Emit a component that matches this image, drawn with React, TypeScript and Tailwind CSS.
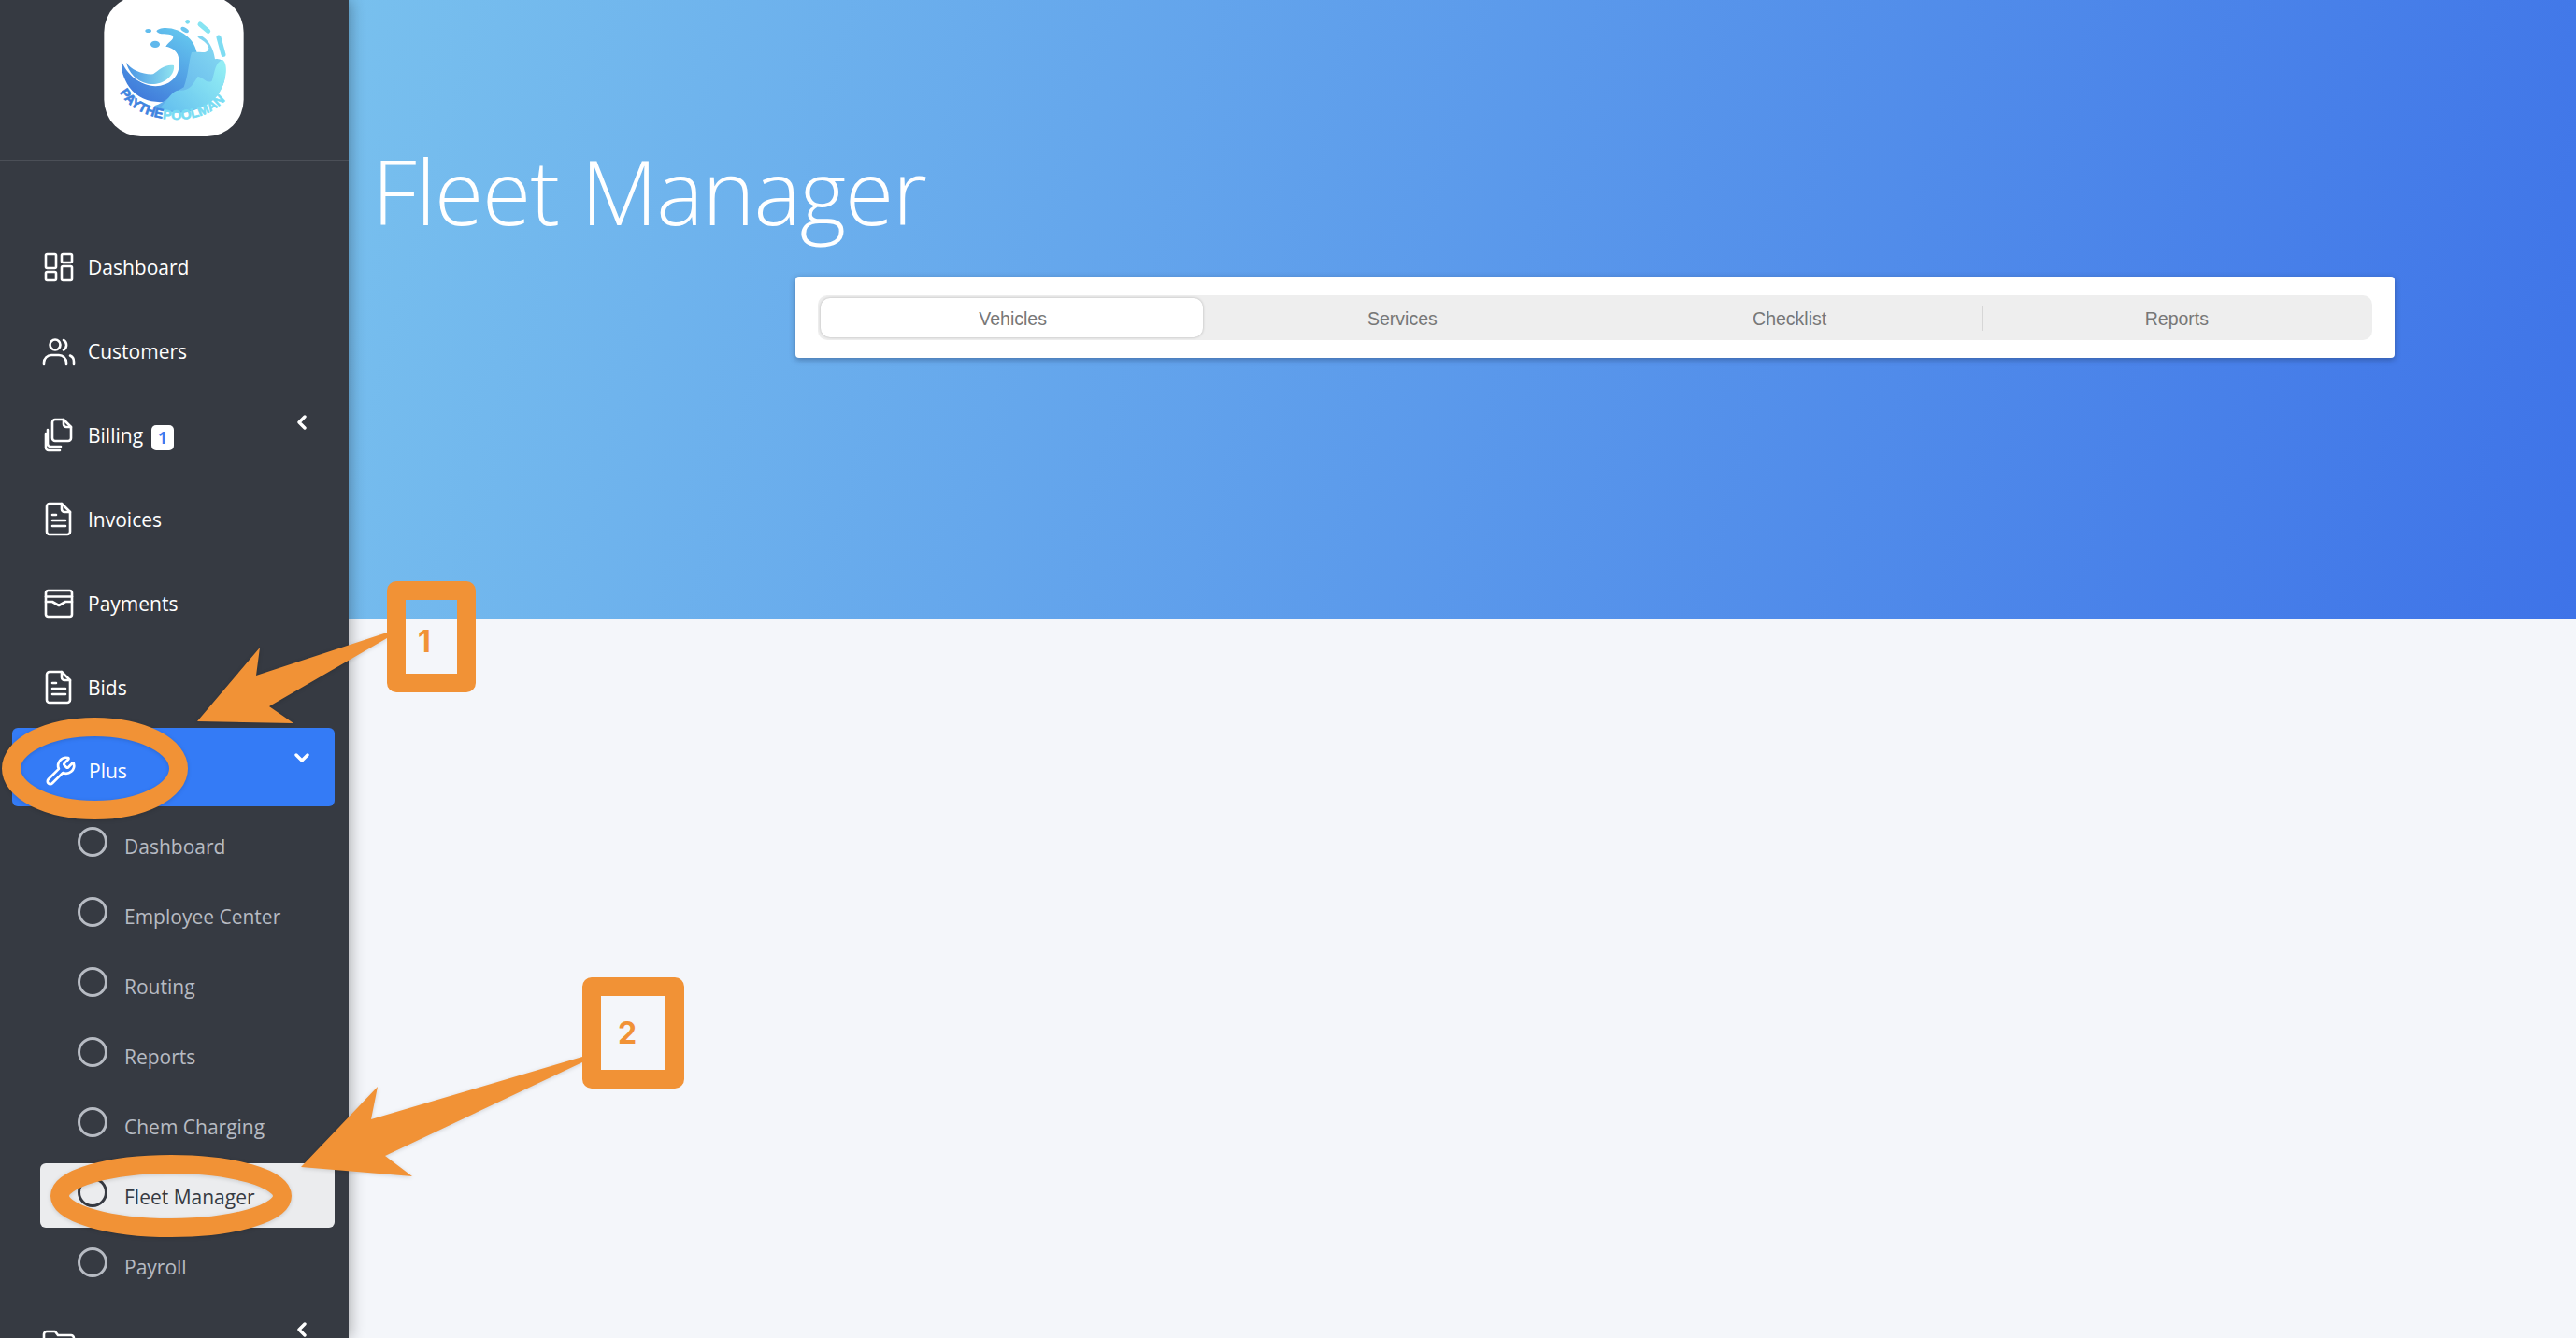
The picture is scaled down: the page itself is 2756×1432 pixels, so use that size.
import React from "react";
import { Wrench } from "lucide-react";

const strokeProps = {
  fill: "none",
  stroke: "currentColor",
  strokeWidth: 2.6,
  strokeLinecap: "round" as const,
  strokeLinejoin: "round" as const,
};

function Glyph(props: { children: React.ReactNode }) {
  return (
    <svg width="30" height="30" viewBox="0 0 30 30" className="shrink-0 overflow-visible" {...strokeProps}>
      {props.children}
    </svg>
  );
}

function DashIcon() {
  return (
    <Glyph>
      <rect x="1" y="1" width="11" height="15" rx="1.5" />
      <rect x="18" y="1" width="11" height="9" rx="1.5" />
      <rect x="1" y="20" width="11" height="9" rx="1.5" />
      <rect x="18" y="14" width="11" height="15" rx="1.5" />
    </Glyph>
  );
}

function UsersIcon() {
  return (
    <Glyph>
      <circle cx="11" cy="8" r="5.5" />
      <path d="M-1 29v-2a8 8 0 0 1 8-8h8a8 8 0 0 1 8 8v2" />
      <path d="M20 3a6 6 0 0 1 0 10.5" />
      <path d="M27 19.5a7 7 0 0 1 4 6.5v3" />
    </Glyph>
  );
}

function CopyIcon() {
  return (
    <Glyph>
      <path d="M11 -2h9l8 8v12a3 3 0 0 1-3 3h-14a3 3 0 0 1-3-3v-17a3 3 0 0 1 3-3z" />
      <path d="M20 -2v5a3 3 0 0 0 3 3h5" />
      <path d="M3 9v15a3 3 0 0 0 3 3h11" />
      <path d="M1 13v15a3 3 0 0 0 3 3h12" />
    </Glyph>
  );
}

function DocIcon() {
  return (
    <Glyph>
      <path d="M5 -2h13l9 9v21a3 3 0 0 1-3 3h-19a3 3 0 0 1-3-3v-27a3 3 0 0 1 3-3z" />
      <path d="M18 -2v6a3 3 0 0 0 3 3h6" />
      <path d="M8 10h4M8 16h14M8 22h14" />
    </Glyph>
  );
}

function MailIcon() {
  return (
    <Glyph>
      <rect x="1" y="1" width="28" height="28" rx="2.5" />
      <path d="M1 7.5h28" />
      <path d="M1 13h7l7 4 7-4h7" />
    </Glyph>
  );
}

function FolderIcon() {
  return (
    <Glyph>
      <path d="M-1 6a3 3 0 0 1 3-3h9l3 4h14a3 3 0 0 1 3 3v15a3 3 0 0 1-3 3h-26a3 3 0 0 1-3-3z" />
    </Glyph>
  );
}

function ChevronLeft() {
  return (
    <svg width="12" height="16" viewBox="0 0 12 16" fill="none" stroke="currentColor" strokeWidth="3.4" strokeLinecap="round" strokeLinejoin="round">
      <path d="M9 2 3 8l6 6" />
    </svg>
  );
}

function ChevronDown() {
  return (
    <svg width="16" height="12" viewBox="0 0 16 12" fill="none" stroke="currentColor" strokeWidth="3.4" strokeLinecap="round" strokeLinejoin="round">
      <path d="M2 3l6 6 6-6" />
    </svg>
  );
}

function Logo() {
  return (
    <svg width="150" height="146" viewBox="64 0 448 438" className="absolute left-[111px] top-0">
      <defs>
        <linearGradient id="lgA" x1="0.1" y1="0.9" x2="0.7" y2="0">
          <stop offset="0" stopColor="#3f78da" />
          <stop offset="1" stopColor="#63c4ee" />
        </linearGradient>
        <linearGradient id="lgB" x1="0" y1="0.5" x2="1" y2="0.5">
          <stop offset="0" stopColor="#4a94e4" />
          <stop offset="1" stopColor="#8fe3f0" />
        </linearGradient>
        <linearGradient id="lgC" x1="0" y1="1" x2="1" y2="0">
          <stop offset="0" stopColor="#5aa8ea" />
          <stop offset="1" stopColor="#88def2" />
        </linearGradient>
        <linearGradient id="lgD" x1="0" y1="1" x2="1" y2="0.2">
          <stop offset="0" stopColor="#62bdee" />
          <stop offset="1" stopColor="#92edf4" />
        </linearGradient>
        <path id="logoArc" d="M114 296C170 402 395 424 472 296" />
      </defs>
      <rect x="64" y="-14" width="448" height="452" rx="118" fill="#fff" />
      <path d="M232 100C240 85 300 82 340 125C375 165 372 230 340 285C300 340 190 345 145 280C125 250 118 225 120 195C135 240 190 285 245 275C300 265 315 215 300 175C290 155 270 150 262 150C268 135 290 130 285 115C270 105 240 115 232 100Z" fill="url(#lgA)" />
      <path d="M135 200C150 225 190 240 222 238C240 225 260 205 288 210C292 240 260 268 225 270C180 272 145 240 135 200Z" fill="url(#lgB)" />
      <path d="M345 168C375 165 395 175 400 155C395 130 360 125 365 115C385 110 415 145 420 190C450 185 460 210 450 260C435 320 360 365 300 362C260 360 230 350 225 340C260 330 290 295 320 280C335 240 335 200 345 168Z" fill="url(#lgC)" />
      <path d="M245 345C270 320 285 285 310 290C340 290 350 270 365 245C385 250 395 270 410 260C420 230 420 200 445 192C465 210 455 265 430 305C395 350 310 375 245 345Z" fill="url(#lgD)" />
      <ellipse cx="206" cy="99" rx="10" ry="6" fill="#62bdee" />
      <ellipse cx="228" cy="142" rx="15" ry="11" fill="#5fb8ec" />
      <ellipse cx="323" cy="96" rx="14" ry="7" transform="rotate(30 323 96)" fill="#6cc6f0" />
      <circle cx="332" cy="70" r="7" fill="#7adbf0" />
      <path d="M372 78 398 100" stroke="#86e4f2" strokeWidth="15" strokeLinecap="round" fill="none" />
      <path d="M432 120 447 175" stroke="#7edcf2" strokeWidth="15" strokeLinecap="round" fill="none" />
      <text fontFamily="'Liberation Sans', sans-serif" fontWeight="700" fontSize="42">
        <textPath href="#logoArc" textLength="385" lengthAdjust="spacingAndGlyphs">
          <tspan fill="#3f84e0" stroke="#3f84e0" strokeWidth="2">PAYTHE</tspan>
          <tspan fill="#78dcf3" stroke="#78dcf3" strokeWidth="2">POOLMAN</tspan>
        </textPath>
      </text>
    </svg>
  );
}

const topItems = [
  { label: "Dashboard", icon: <DashIcon /> },
  { label: "Customers", icon: <UsersIcon /> },
  { label: "Billing", icon: <CopyIcon />, badge: "1", chevron: true },
  { label: "Invoices", icon: <DocIcon /> },
  { label: "Payments", icon: <MailIcon /> },
  { label: "Bids", icon: <DocIcon /> },
];

const subItems = ["Dashboard", "Employee Center", "Routing", "Reports", "Chem Charging", "Fleet Manager", "Payroll"];

const tabs = ["Vehicles", "Services", "Checklist", "Reports"];

function Sidebar() {
  return (
    <aside className="relative z-10 h-[1432px] w-[373px] shrink-0 overflow-hidden bg-[#363a42] text-[21px] text-white shadow-[3px_0_14px_rgba(0,0,0,0.28)]">
      <div className="relative h-[172px] border-b border-[#4b4f57]">
        <Logo />
      </div>
      <nav className="pt-[72px]">
        {topItems.map((item) => (
          <div key={item.label} className="mb-[6px] flex h-[84px] items-center pl-[48px]">
            {item.icon}
            <span className="ml-[16px] pt-[1px]">{item.label}</span>
            {item.badge && (
              <span className="ml-[9px] mt-[4px] flex h-[27px] w-[24px] items-center justify-center rounded-[5px] bg-white text-[18px] font-bold text-[#3a7bf0]">
                {item.badge}
              </span>
            )}
            {item.chevron && (
              <span className="ml-auto mr-[44px] mb-[28px]">
                <ChevronLeft />
              </span>
            )}
          </div>
        ))}
        <div className="-mt-[5px] ml-[13px] mr-[15px] flex h-[84px] items-center rounded-[6px] bg-[#347bf6] pl-[35px] pt-[8px]">
          <Wrench size={34} strokeWidth={1.9} className="shrink-0" />
          <span className="ml-[13px] pt-[2px]">Plus</span>
          <span className="ml-auto mr-[27px] mb-[28px]">
            <ChevronDown />
          </span>
        </div>
        <ul className="mt-[7px] flex flex-col gap-[6px]">
          {subItems.map((label) => {
            const active = label === "Fleet Manager";
            return (
              <li
                key={label}
                className={
                  active
                    ? "ml-[43px] mr-[15px] flex h-[69px] items-center rounded-[6px] bg-[#ebecee] pl-[40px] text-[#363a42]"
                    : "ml-[43px] mr-[15px] flex h-[69px] items-center pl-[40px] text-[#b7bbc3]"
                }
              >
                <span className="mb-[7px] h-[32px] w-[32px] shrink-0 rounded-full border-[3px] border-current" />
                <span className="ml-[18px] whitespace-nowrap pt-[4px]">{label}</span>
              </li>
            );
          })}
        </ul>
        <div className="mt-[6px] flex h-[84px] items-center pl-[48px]">
          <FolderIcon />
          <span className="ml-auto mr-[44px] mb-[28px]">
            <ChevronLeft />
          </span>
        </div>
      </nav>
    </aside>
  );
}

function Tabs() {
  return (
    <div className="ml-[478px] mr-[194px] rounded-[4px] bg-white px-[24px] pb-[19px] pt-[20px] shadow-[0_2px_6px_rgba(30,50,90,0.45)]">
      <div className="grid h-[48px] grid-cols-4 rounded-[10px] bg-[#eeeeee] p-[3px] font-['Liberation_Sans',sans-serif] text-[19.5px] text-[#777777]">
        {tabs.map((tab, i) => (
          <div key={tab} className="relative flex items-center justify-center pl-[2px] pt-[3px]">
            {i === 0 ? (
              <div className="-ml-[2px] -mt-[3px] mr-[5px] flex h-[42px] w-full items-center justify-center rounded-[10px] bg-white pl-[2px] pt-[3px] shadow-[0_0_3px_rgba(0,0,0,0.25)]">
                {tab}
              </div>
            ) : (
              tab
            )}
            {i > 1 && <span className="absolute left-0 top-[8px] h-[27px] w-px bg-[#d6d6d6]" />}
          </div>
        ))}
      </div>
    </div>
  );
}

function Annotations() {
  const orange = "#f19236";
  return (
    <>
      <svg width="2756" height="1432" className="pointer-events-none absolute left-0 top-0 z-20 drop-shadow-[0_1px_2px_rgba(0,0,0,0.15)]">
        <ellipse cx="101.5" cy="822.5" rx="89.5" ry="44.5" fill="none" stroke={orange} strokeWidth="20" />
        <polygon points="414,677 414,683 288,756 314,774 211,772 278,693 274,723" fill={orange} />
        <ellipse cx="183" cy="1280" rx="119" ry="34" fill="none" stroke={orange} strokeWidth="20" />
        <polygon points="623,1131 623,1137 412,1237 441,1259 322,1249 404,1163 397,1198" fill={orange} />
      </svg>
      <div className="absolute left-[414px] top-[622px] z-20 h-[119px] w-[95px] rounded-[10px] border-[20px] border-[#f19236] font-['Inter',sans-serif] text-[32px] font-bold text-[#f19236]">
        <span className="absolute left-[13px] top-[29px] leading-none">1</span>
      </div>
      <div className="absolute left-[623px] top-[1046px] z-20 h-[119px] w-[109px] rounded-[10px] border-[20px] border-[#f19236] font-['Inter',sans-serif] text-[32px] font-bold text-[#f19236]">
        <span className="absolute left-[18px] top-[24px] leading-none">2</span>
      </div>
    </>
  );
}

export default function App() {
  return (
    <div className="relative flex h-[1432px] w-[2756px] overflow-hidden bg-[#f4f6fa] font-['Open_Sans',sans-serif]">
      <Sidebar />
      <main className="min-w-0 flex-1">
        <section className="h-[663px] bg-[linear-gradient(105deg,#78c0ee_0%,#3e73e8_100%)] pt-[144px]">
          <h1 className="h-[152px] pl-[25px] text-[95px] font-light leading-[120px] tracking-[-1.1px] text-white">Fleet Manager</h1>
          <Tabs />
        </section>
      </main>
      <Annotations />
    </div>
  );
}
